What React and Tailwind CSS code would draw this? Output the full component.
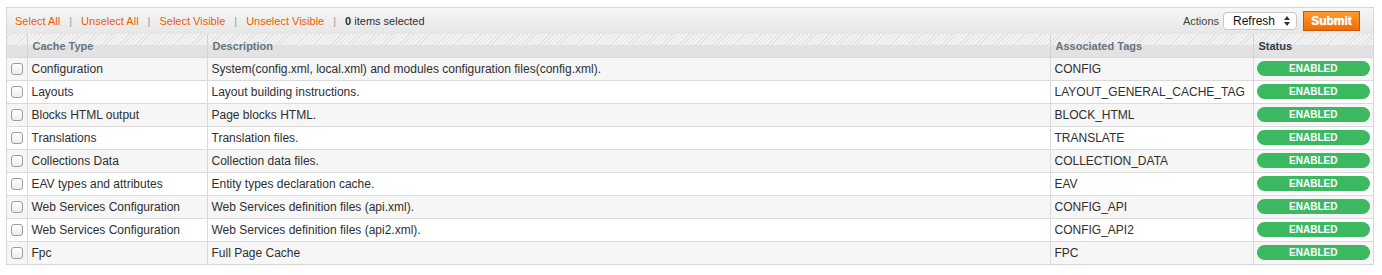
import React from 'react';

const rows = [
  ['Configuration', 'System(config.xml, local.xml) and modules configuration files(config.xml).', 'CONFIG'],
  ['Layouts', 'Layout building instructions.', 'LAYOUT_GENERAL_CACHE_TAG'],
  ['Blocks HTML output', 'Page blocks HTML.', 'BLOCK_HTML'],
  ['Translations', 'Translation files.', 'TRANSLATE'],
  ['Collections Data', 'Collection data files.', 'COLLECTION_DATA'],
  ['EAV types and attributes', 'Entity types declaration cache.', 'EAV'],
  ['Web Services Configuration', 'Web Services definition files (api.xml).', 'CONFIG_API'],
  ['Web Services Configuration', 'Web Services definition files (api2.xml).', 'CONFIG_API2'],
  ['Fpc', 'Full Page Cache', 'FPC'],
];

function Sep() {
  return <span className="mx-[9px] text-[#9a9a9a]">|</span>;
}

function Checkbox() {
  return (
    <span className="block h-[12px] w-[12px] rounded-[3px] border border-[#9d9d9d] bg-[linear-gradient(to_bottom,#ffffff,#ececec)]" />
  );
}

export default function App() {
  const headCell = 'h-[23px] border-l border-[#d3d3d3] px-[5px] pt-[1px] text-left align-middle text-[11px] font-bold';
  return (
    <div className="bg-white pl-[6px] pt-[7px] font-['Liberation_Sans',Arial,sans-serif] text-[#2f2f2f]">
      <div className="w-[1368px] border border-[#d6d6d6]">
        <div className="flex h-[26px] items-center justify-between bg-[linear-gradient(to_bottom,#f6f6f6,#e6e6e6)] pl-[8px] pr-[13px] text-[11px]">
          <div className="flex items-center">
            <span className="text-[#eb5e00]">Select All</span>
            <Sep />
            <span className="text-[#eb5e00]">Unselect All</span>
            <Sep />
            <span className="text-[#eb5e00]">Select Visible</span>
            <Sep />
            <span className="text-[#eb5e00]">Unselect Visible</span>
            <Sep />
            <span className="text-[#2f2f2f]">
              <b>0</b> items selected
            </span>
          </div>
          <div className="flex items-center">
            <span className="mr-[4px] text-[#444]">Actions</span>
            <div className="mr-[6px] flex h-[18px] w-[74px] items-center justify-between rounded-[4px] border border-[#c8c8c8] bg-white pl-[9px] pr-[6px] text-[12px] text-[#111]">
              <span>Refresh</span>
              <svg width="6" height="10" viewBox="0 0 6 10">
                <path d="M3 0 L6 4 L0 4 Z" fill="#333" />
                <path d="M3 10 L6 6 L0 6 Z" fill="#333" />
              </svg>
            </div>
            <button className="flex h-[20px] w-[57px] items-center justify-center border border-[#c75a00] bg-[linear-gradient(to_bottom,#ff9a2e,#f36b00)] text-[12px] font-bold text-white [text-shadow:0_0_1px_#fff]">
              Submit
            </button>
          </div>
        </div>
        <table className="w-full table-fixed border-collapse text-[12px]">
          <colgroup>
            <col className="w-[20px]" />
            <col className="w-[180px]" />
            <col className="w-[843px]" />
            <col className="w-[203px]" />
            <col className="w-[120px]" />
          </colgroup>
          <thead>
            <tr className="bg-[image:linear-gradient(to_bottom,transparent_11px,#e2e2e2_11px),repeating-linear-gradient(135deg,#f3f3f3_0px,#f3f3f3_2px,#e2e2e2_2px,#e2e2e2_3px)]">
              <th className="h-[23px]" />
              <th className={`${headCell} text-[#66757f]`}>Cache Type</th>
              <th className={`${headCell} text-[#66757f]`}>Description</th>
              <th className={`${headCell} text-[#66757f]`}>Associated Tags</th>
              <th className={`${headCell} text-[#2c3b4a]`}>Status</th>
            </tr>
          </thead>
          <tbody>
            {rows.map((r, i) => (
              <tr key={i} className={i % 2 === 0 ? 'bg-[#f6f6f6]' : 'bg-white'}>
                <td className="h-[23px] border-t border-[#dadada] pl-[4px] align-middle">
                  <Checkbox />
                </td>
                <td className="border-l border-t border-[#dadada] px-[4px] align-middle whitespace-nowrap">{r[0]}</td>
                <td className="border-l border-t border-[#dadada] px-[4px] align-middle whitespace-nowrap">{r[1]}</td>
                <td className="border-l border-t border-[#dadada] px-[4px] align-middle whitespace-nowrap">{r[2]}</td>
                <td className="border-l border-t border-[#dadada] px-[3px] align-middle">
                  <div className="flex h-[15px] items-center justify-center rounded-full bg-[#3cb861] text-[10px] font-bold text-white">
                    ENABLED
                  </div>
                </td>
              </tr>
            ))}
          </tbody>
        </table>
      </div>
    </div>
  );
}
